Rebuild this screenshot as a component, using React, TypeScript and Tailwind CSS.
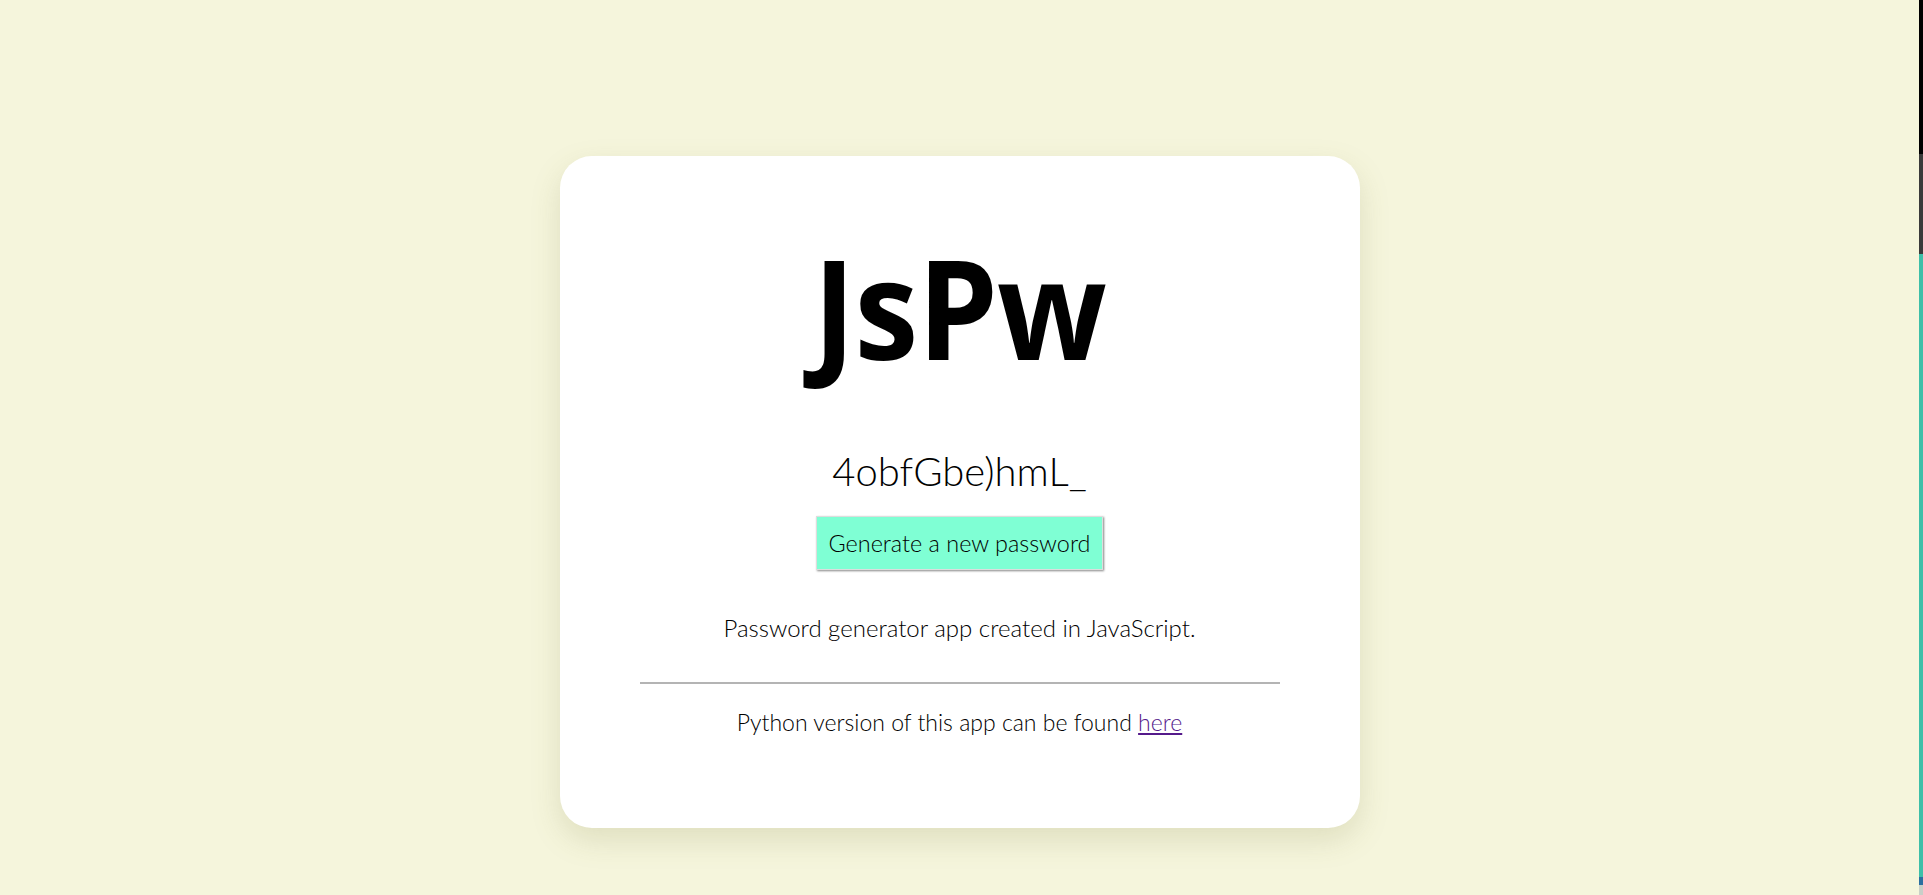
const App = () => {
  return (
    <div className="flex min-h-[895px] bg-[#f5f5dc]" style={{ fontFamily: "Lato, 'Open Sans', sans-serif" }}>
      <main className="flex flex-1 justify-center pt-[156px]">
        <div className="w-[800px] h-[672px] bg-white rounded-[32px] shadow-[0_12px_30px_rgba(120,120,60,0.18)] flex flex-col items-center pt-[81px]">
          <h1 className="text-[138px] leading-none font-bold text-black tracking-[-1px] scale-x-[0.93]" style={{ fontFamily: "'Open Sans', sans-serif" }}>
            JsPw
          </h1>
          <p className="mt-[72px] text-[40px] leading-[1.2] font-light text-black">4obfGbe)hmL_</p>
          <button className="mt-[21px] px-3 py-3 text-[23.4px] leading-[1.2] font-light text-black bg-[#7fffd4] border border-[#ddd] shadow-[1px_1px_2px_#888]">
            Generate a new password
          </button>
          <p className="mt-[44px] text-[24px] leading-[1.2] font-light text-black">
            Password generator app created in JavaScript.
          </p>
          <hr className="mt-[39px] w-[640px] border-0 border-t-2 border-[#b4b4b4]" />
          <p className="mt-[25px] text-[23px] leading-[1.2] font-light text-black">
            Python version of this app can be found{" "}
            <a href="#" className="text-[#551a8b] underline">here</a>
          </p>
        </div>
      </main>
      <div className="w-[4px] flex flex-col">
        <div className="h-[154px] bg-black" />
        <div className="h-[100px] bg-[#3a3a3a]" />
        <div className="flex-1 bg-[#3dbfa8]" />
        <div className="h-[8px] bg-[#2a6fa0]" />
        <div className="h-[10px] bg-[#c8cfc8]" />
      </div>
    </div>
  );
};

export default App;
